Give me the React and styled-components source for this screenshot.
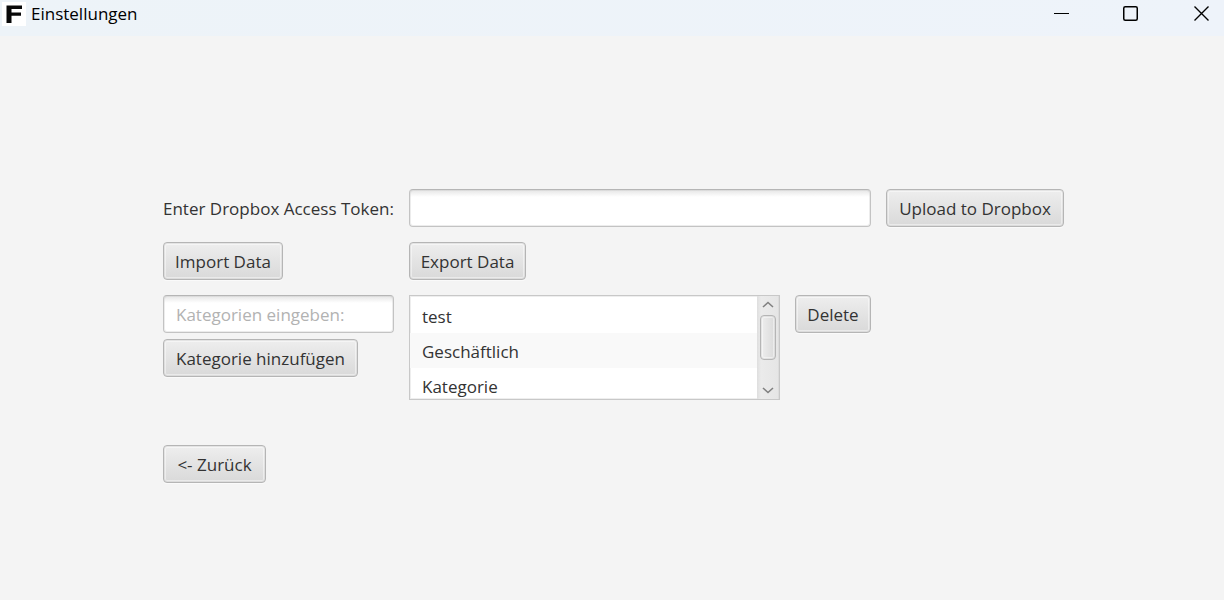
import React from "react";
import styled, { createGlobalStyle } from "styled-components";

const GlobalStyle = createGlobalStyle`
  *, *::before, *::after { box-sizing: border-box; }
  body {
    margin: 0;
    background: #f4f4f4;
    color: #333;
    font-family: "Segoe UI", "Open Sans", "Noto Sans", sans-serif;
    font-size: 17px;
    line-height: 24px;
  }
  button, input { font: inherit; color: inherit; }
`;

const Window = styled.div`
  min-height: 100vh;
  display: flex;
  flex-direction: column;
`;

const TitleBar = styled.header`
  height: 36px;
  display: flex;
  align-items: flex-start;
  justify-content: space-between;
  background: linear-gradient(90deg, #edf3f8, #eef3fa);
  color: #000;
`;

const TitleGroup = styled.div`
  display: flex;
  align-items: center;
  gap: 5px;
  padding: 1px 0 0 2px;
`;

const Title = styled.h1`
  margin: 0;
  font-size: 17px;
  font-weight: 400;
  line-height: 26px;
`;

const WindowControls = styled.div`
  display: flex;
`;

const ControlButton = styled.button`
  width: 69px;
  height: 27px;
  padding: 0;
  border: 0;
  background: none;
  display: grid;
  place-items: center;

  &:last-child {
    width: 45px;
    margin-left: 14px;
  }
`;

const Form = styled.main`
  width: 100%;
  max-width: 904px;
  margin: 0 auto;
  padding: 153px 0 32px 3px;
  display: grid;
  grid-template-columns: 231px minmax(160px, 1fr) 76px 178px;
  gap: 15px;
  align-items: start;
`;

const FieldLabel = styled.label`
  padding-top: 2px;
  align-self: center;
  white-space: nowrap;
`;

const TextField = styled.input`
  width: 100%;
  height: 38px;
  padding: 0 12px;
  border: 1px solid #c3c3c3;
  border-top-color: #b5b5b5;
  border-radius: 4px;
  background: linear-gradient(#e6e6e6, #fff 7px);
  box-shadow: inset 0 0 0 1px #c3c3c350;
  outline: none;
  grid-column: ${({ $span }) => ($span ? `span ${$span}` : "auto")};

  &::placeholder {
    color: #b2b2b2;
    opacity: 1;
  }
`;

const Button = styled.button`
  width: ${({ $width }) => $width}px;
  height: 38px;
  padding: 2px 0 0;
  border: 1px solid #b5b5b5;
  border-radius: 4px;
  background: linear-gradient(#eeeeee, #d9d9d9);
  box-shadow: inset 0 0 0 1px #b5b5b540, inset 0 0 0 2px #ffffff70, 0 1px 0 #fafafa;
  white-space: nowrap;
`;

const Stack = styled.div`
  display: flex;
  flex-direction: column;
  gap: 6px;
`;

const ListBox = styled.div`
  height: 105px;
  display: flex;
  border: 1px solid #c8c8c8;
  background: #fff;
  box-shadow: inset 0 0 0 1px #c8c8c850;
`;

const Items = styled.ul`
  flex: 1;
  margin: 0;
  padding: 2px 0 0;
  overflow: hidden;
  list-style: none;
`;

const Item = styled.li`
  height: 35px;
  padding: 0 12px;
  line-height: 37px;

  &:nth-child(even) { background: #f9f9f9; }
`;

const ScrollBar = styled.div`
  width: 22px;
  display: flex;
  flex-direction: column;
  align-items: center;
  background: linear-gradient(90deg, #dedede, #ebebeb 4px, #e5e5e5);
  box-shadow: inset -1px 0 0 #c8c8c850;
`;

const ScrollButton = styled.button`
  width: 100%;
  height: 17px;
  padding: 0;
  border: 0;
  background: none;
  display: grid;
  place-items: center;
`;

const ScrollTrack = styled.div`
  flex: 1;
  padding-top: 2px;
`;

const ScrollThumb = styled.div`
  width: 16px;
  height: 45px;
  border: 1px solid #b5b5b5;
  border-radius: 4px;
  background: linear-gradient(90deg, #eeeeee, #dadada);
  box-shadow: inset 0 0 0 1px #b5b5b540, inset 0 0 0 2px #ffffff70;
`;

const Footer = styled.div`
  grid-column: 1 / -1;
  padding-top: 30px;
`;

const Logo = () => (
  <svg width="24" height="24" viewBox="0 0 24 24" aria-hidden="true">
    <rect width="24" height="24" fill="#fff" />
    <path d="M4.5 3.5H20V7H9.5V10.5H19V13.7H9.5V21H4.5Z" fill="#080808" />
  </svg>
);

const Glyph = ({ children }) => (
  <svg width="15" height="15" viewBox="0 0 15 15" fill="none" stroke="#000" aria-hidden="true">
    {children}
  </svg>
);

const Chevron = ({ d }) => (
  <svg width="12" height="7" viewBox="0 0 12 7" fill="none" stroke="#808080" strokeWidth="1.6" aria-hidden="true">
    <path d={d} />
  </svg>
);

const categories = ["test", "Geschäftlich", "Kategorie"];

export default function App() {
  return (
    <Window>
      <GlobalStyle />
      <TitleBar>
        <TitleGroup>
          <Logo />
          <Title>Einstellungen</Title>
        </TitleGroup>
        <WindowControls>
          <ControlButton aria-label="Minimieren">
            <Glyph><path d="M0 7.5H15" /></Glyph>
          </ControlButton>
          <ControlButton aria-label="Maximieren">
            <Glyph><rect x="0.75" y="0.75" width="13.5" height="13.5" rx="1.5" strokeWidth="1.5" /></Glyph>
          </ControlButton>
          <ControlButton aria-label="Schließen">
            <Glyph><path d="M0.5 0.5L14.5 14.5M14.5 0.5L0.5 14.5" strokeWidth="1.4" /></Glyph>
          </ControlButton>
        </WindowControls>
      </TitleBar>
      <Form>
        <FieldLabel htmlFor="token">Enter Dropbox Access Token:</FieldLabel>
        <TextField id="token" type="text" $span={2} />
        <Button $width={178}>Upload to Dropbox</Button>

        <Button $width={120}>Import Data</Button>
        <Button $width={117}>Export Data</Button>
        <span />
        <span />

        <Stack>
          <TextField type="text" placeholder="Kategorien eingeben:" aria-label="Kategorien eingeben" />
          <Button $width={195}>Kategorie hinzufügen</Button>
        </Stack>
        <ListBox>
          <Items>
            {categories.map((name) => <Item key={name}>{name}</Item>)}
          </Items>
          <ScrollBar>
            <ScrollButton aria-label="Nach oben"><Chevron d="M1 6L6 1.5L11 6" /></ScrollButton>
            <ScrollTrack><ScrollThumb /></ScrollTrack>
            <ScrollButton aria-label="Nach unten"><Chevron d="M1 1L6 5.5L11 1" /></ScrollButton>
          </ScrollBar>
        </ListBox>
        <Button $width={76}>Delete</Button>

        <Footer>
          <Button $width={103}>&lt;- Zurück</Button>
        </Footer>
      </Form>
    </Window>
  );
}
